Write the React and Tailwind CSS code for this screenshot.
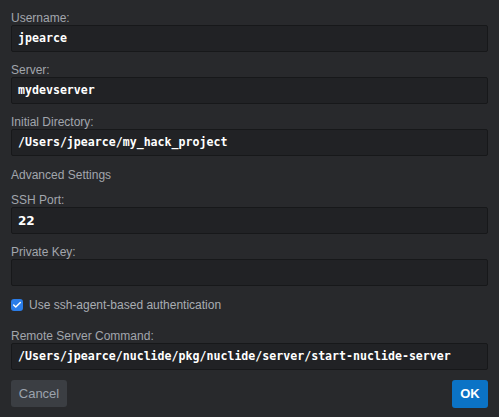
import { Check } from "lucide-react";

const mono = "font-['DejaVu_Sans_Mono','Liberation_Mono',monospace]";

function Field({ label, value, sans }) {
  return (
    <div className="flex flex-col">
      <label className="h-[25px] pt-[11px] text-[12px] leading-[14px] text-[#a2a6ad]">{label}</label>
      <div
        className={`h-[27px] flex items-center px-[6px] rounded-[2px] border border-[#17181a] bg-[#212225] text-white font-bold ${
          sans ? "font-['DejaVu_Sans',sans-serif] text-[12px]" : `${mono} text-[11.6px]`
        }`}
      >
        {value}
      </div>
    </div>
  );
}

export default function App() {
  return (
    <div className="w-[499px] h-[417px] bg-[#28292c] px-[11px] pt-0 font-['Liberation_Sans',Arial,sans-serif] flex flex-col">
      <Field label="Username:" value="jpearce" />
      <Field label="Server:" value="mydevserver" />
      <Field label="Initial Directory:" value="/Users/jpearce/my_hack_project" />

      <div className="h-[36px] pt-[12px] text-[12px] leading-[14px] text-[#a2a6ad]">Advanced Settings</div>
      <div className="-mt-[10px]">
        <Field label="SSH Port:" value="22" sans />
      </div>
      <Field label="Private Key:" value="" />

      <div className="flex items-center gap-[6px] mt-[13px] h-[12px]">
        <span className="w-[12px] h-[12px] rounded-[3px] bg-[#2b7de9] flex items-center justify-center">
          <Check size={10} strokeWidth={3.5} className="text-white" />
        </span>
        <span className="text-[12px] text-[#a9adb3]">Use ssh-agent-based authentication</span>
      </div>

      <div className="mt-[7px]">
        <Field label="Remote Server Command:" value="/Users/jpearce/nuclide/pkg/nuclide/server/start-nuclide-server" />
      </div>

      <div className="flex justify-between mt-[10px]">
        <button className="h-[27px] w-[56px] rounded-[3px] bg-[#3b3e43] text-[#9ca3ad] text-[13px]">Cancel</button>
        <button className="h-[28px] w-[36px] rounded-[3px] bg-[#0b73c6] text-white font-bold text-[13px]">OK</button>
      </div>
    </div>
  );
}
